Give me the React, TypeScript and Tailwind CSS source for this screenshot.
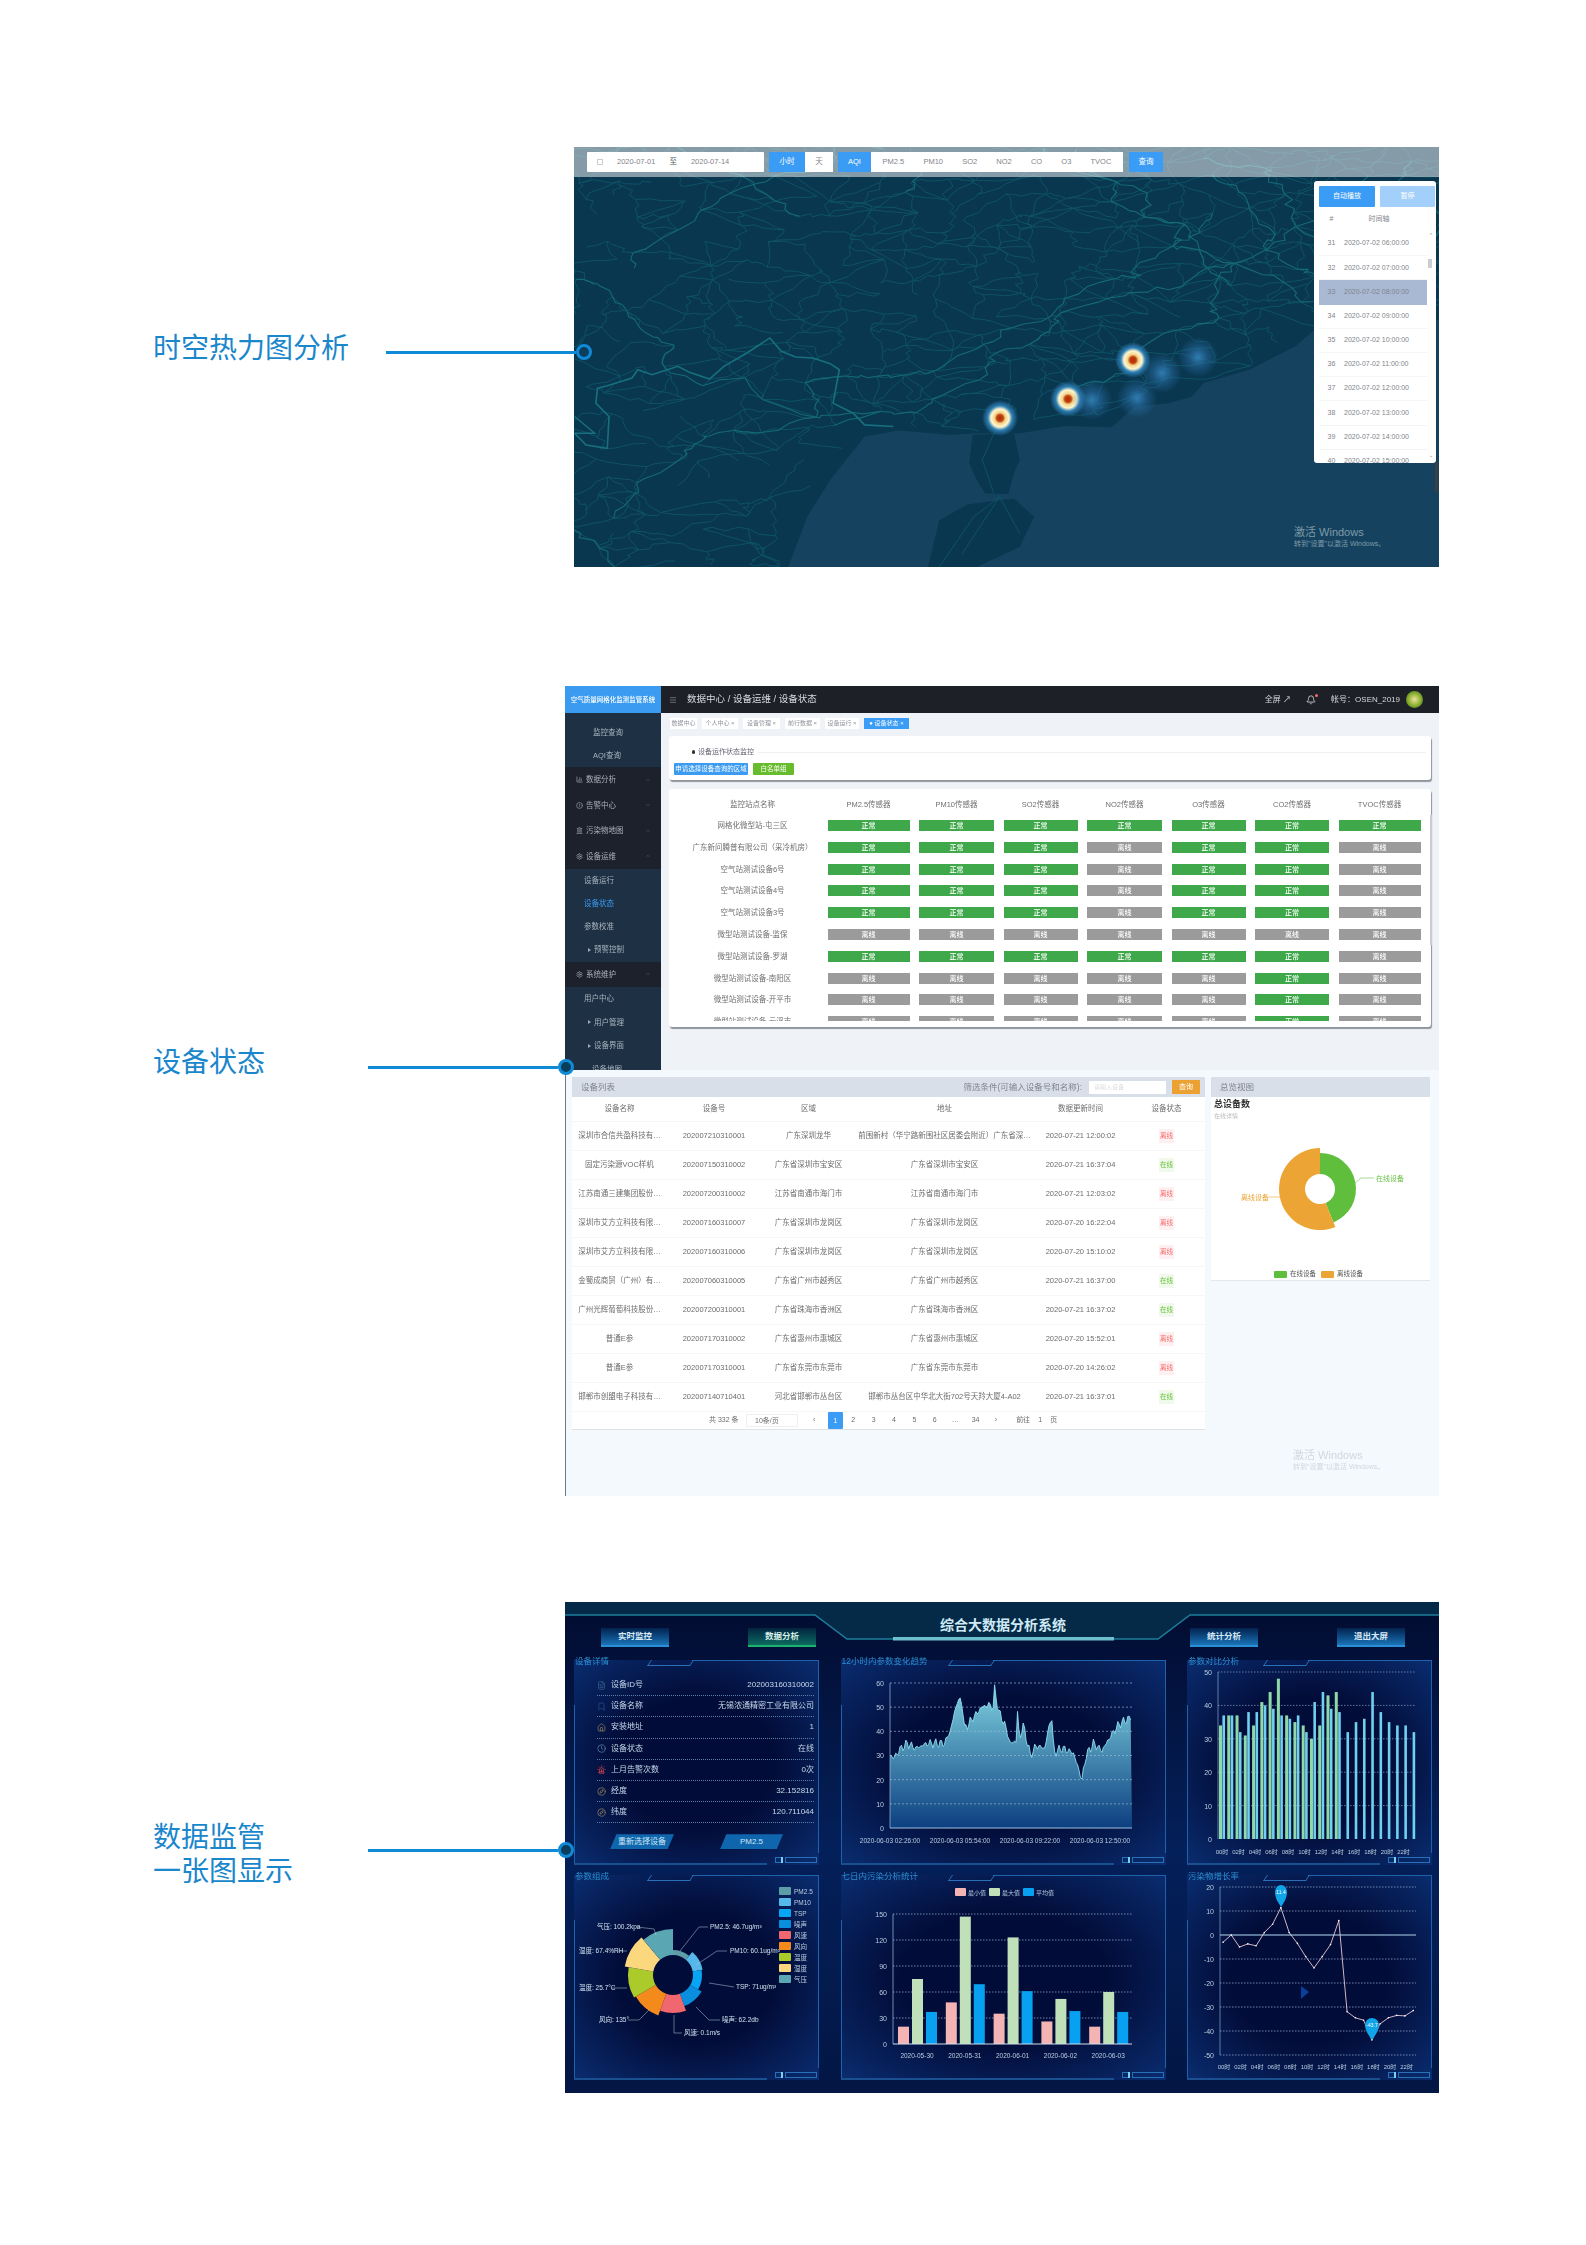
import type { ReactNode } from "react";
import { Bell, Bookmark, ChartColumn, ChevronDown, ChevronUp, CircleAlert, Clock, Compass, FileText, House, Landmark, Menu, Settings, Siren } from "lucide-react";

// seeded random so the map is the same on every load
function rng(seed: number) {
  let s = seed;
  return () => {
    s = (s * 1664525 + 1013904223) % 4294967296;
    return s / 4294967296;
  };
}

const COAST: [number, number][] = [
  [24, 3000], [395, 1290], [430, 1130], [470, 1020], [530, 890], [590, 872], [680, 885], [720, 880], [800, 880], [880, 858],
  [960, 862], [1000, 800], [1060, 790], [1100, 770], [1120, 730], [1200, 690], [1280, 620], [1310, 575], [1530, 540],
];

function coastY(x: number) {
  for (let i = 1; i < COAST.length; i++) {
    const [x0, y0] = COAST[i - 1];
    const [x1, y1] = COAST[i];
    if (x <= x1) return y0 + ((x - x0) / (x1 - x0)) * (y1 - y0);
  }
  return 540;
}

type Pt = { x: number; y: number };

function buildRoads() {
  const r = rng(71);
  const nodes: Pt[][] = [];
  for (let i = 0; i < 27; i++) {
    const col: Pt[] = [];
    for (let j = 0; j < 26; j++) {
      col.push({ x: 24 + i * 58 + (r() - 0.5) * 46, y: 24 + j * 50 + (r() - 0.5) * 36 });
    }
    nodes.push(col);
  }
  const link = (a: Pt, b: Pt) => {
    const parts = [`M${a.x.toFixed(0)} ${a.y.toFixed(0)}`];
    for (let t = 1; t < 4; t++) {
      const x = a.x + ((b.x - a.x) * t) / 4 + (r() - 0.5) * 18;
      const y = a.y + ((b.y - a.y) * t) / 4 + (r() - 0.5) * 14;
      parts.push(`L${x.toFixed(0)} ${y.toFixed(0)}`);
    }
    parts.push(`L${b.x.toFixed(0)} ${b.y.toFixed(0)}`);
    return parts.join(" ");
  };
  const thin: string[] = [];
  const main: string[] = [];
  for (let i = 0; i < 27; i++) {
    for (let j = 0; j < 26; j++) {
      const a = nodes[i][j];
      if (a.y > coastY(a.x) - 6) continue;
      const targets = [nodes[i + 1]?.[j], nodes[i]?.[j + 1], nodes[i + 1]?.[j + 1], nodes[i + 1]?.[j - 1]];
      targets.forEach((b, k) => {
        if (!b || b.y > coastY(b.x) - 6) return;
        const keep = k >= 2 ? 0.3 : a.x > 500 && a.y < 860 ? 0.75 : 0.5;
        if (r() < keep) thin.push(link(a, b));
      });
    }
  }
  // long highways: walk from node to node, keeping roughly the same heading
  for (let n = 0; n < 22; n++) {
    let i = Math.floor(r() * 27);
    let j = Math.floor(r() * 26);
    const di = r() < 0.5 ? 1 : -1;
    const dj = r() < 0.5 ? 1 : -1;
    for (let step = 0; step < 14; step++) {
      const ni = i + (r() < 0.6 ? di : 0);
      const nj = j + (r() < 0.6 ? dj : 0);
      const a = nodes[i]?.[j];
      const b = nodes[ni]?.[nj];
      if (!a || !b || b.y > coastY(b.x) - 6) break;
      if (a !== b) main.push(link(a, b));
      i = ni;
      j = nj;
    }
  }
  return { thin, main };
}

const ROADS = buildRoads();

const HEAT = [
  { left: 1000, top: 418, hot: true },
  { left: 1068, top: 399, hot: true },
  { left: 1133, top: 360, hot: true },
  { left: 1092, top: 400, hot: false },
  { left: 1137, top: 398, hot: false },
  { left: 1162, top: 373, hot: false },
  { left: 1198, top: 357, hot: false },
];

const TIME_ROWS = ["31|2020-07-02 06:00:00", "32|2020-07-02 07:00:00", "33|2020-07-02 08:00:00", "34|2020-07-02 09:00:00", "35|2020-07-02 10:00:00", "36|2020-07-02 11:00:00", "37|2020-07-02 12:00:00", "38|2020-07-02 13:00:00", "39|2020-07-02 14:00:00", "40|2020-07-02 15:00:00"];

function HeatMapPanel() {
  return (
    <div className="relative w-[865px] h-[420px] overflow-hidden">
      <svg className="block w-[865px] h-[420px] blur-[0.4px]" viewBox="24 24 1506 1256" preserveAspectRatio="none">
        <rect x="24" y="24" width="1506" height="1256" fill="#0a3750" />
        <polygon fill="#15435f" points={COAST.slice(1).map(p => p.join(",")).join(" ") + " 1530,1280 395,1280"} />
        <path d="M718 885 L712 970 L725 1020 L740 1060 L780 1062 L790 1000 L800 960 L790 880 Z" fill="#0a3750" />
        <path d="M640 1280 L660 1140 L710 1092 L790 1075 L825 1130 L800 1220 L725 1280 Z" fill="#0a3750" />
        <g fill="none" stroke="#0f5568" strokeWidth="1" opacity="0.9">
          {ROADS.thin.map((d, i) => <path key={i} d={d} vectorEffect="non-scaling-stroke" />)}
          <path d="M760 860 L735 960 L755 1060 M660 1280 L720 1130 L765 1070 L800 1180 M765 1070 L700 1240" vectorEffect="non-scaling-stroke" />
        </g>
        <g fill="none" stroke="#146a76" strokeWidth="1.1">
          {ROADS.main.map((d, i) => <path key={i} d={d} vectorEffect="non-scaling-stroke" />)}
        </g>
        <path
          d="M25 880 L45 915 L82 925 L85 830 L62 790 L65 745 L82 738 L125 715 L135 690 L160 705 L205 680 L225 698 L260 718 L285 680 L325 640 L365 595 L385 635 L410 652 L440 655 L470 672 L486 690 L475 790 L510 820 L530 855 L580 860"
          fill="none" stroke="#17707f" strokeWidth="1.6" vectorEffect="non-scaling-stroke"
        />
        <path d="M25 830 L60 880 L25 880" fill="none" stroke="#17707f" strokeWidth="1.4" vectorEffect="non-scaling-stroke" />
      </svg>
      {HEAT.map(p => (
        <div
          key={p.left}
          className={p.hot
            ? "absolute w-[36px] h-[36px] -ml-[18px] -mt-[18px] rounded-full blur-[0.5px] bg-[radial-gradient(circle_closest-side,#a8300c_0%,#c2410c_18%,#f3d48a_30%,#fff6d0_50%,#2f7fb5_68%,#2f7fb500_100%)]"
            : "absolute w-[40px] h-[40px] -ml-[20px] -mt-[20px] rounded-full bg-[radial-gradient(circle_closest-side,#2f7cb0_0%,#2a70a880_45%,#2a70a800_100%)]"}
          style={{ left: p.left - 574, top: p.top - 147 }}
        />
      ))}
      <div className="absolute left-0 top-0 w-full h-[30px] flex items-center pl-[13px] bg-[#ffffff80] text-[7.5px] text-[#7f848c]">
        <div className="w-[177px] h-[20px] bg-white rounded-[1px] flex items-center pl-[10px]">
          <span className="w-[6px] h-[6px] border border-[#ccc] mr-[14px]" />
          <span>2020-07-01</span>
          <span className="mx-[14px] text-[#555]">至</span>
          <span>2020-07-14</span>
        </div>
        <div className="ml-[5px] w-[36px] h-[20px] bg-[#3b9cf5] text-white flex items-center justify-center">小时</div>
        <div className="w-[28px] h-[20px] bg-white flex items-center justify-center">天</div>
        <div className="ml-[5px] w-[33px] h-[20px] bg-[#3b9cf5] text-white flex items-center justify-center">AQI</div>
        <div className="w-[252px] h-[20px] bg-white flex items-center justify-around px-[2px]">
          {["PM2.5", "PM10", "SO2", "NO2", "CO", "O3", "TVOC"].map(t => <span key={t}>{t}</span>)}
        </div>
        <div className="ml-[6px] w-[34px] h-[20px] bg-[#3b9cf5] text-white flex items-center justify-center">查询</div>
      </div>
      <div className="absolute left-[740px] top-[34px] w-[122px] h-[282px] bg-white rounded-[3px] overflow-hidden text-[7px] text-[#7f848c] pl-[5px]">
        <div className="flex gap-[5px] pt-[5px]">
          <div className="w-[56px] h-[21px] bg-[#3b9cf5] text-white flex items-center justify-center rounded-[1px]">自动播放</div>
          <div className="w-[55px] h-[21px] bg-[#a3d0fa] text-white flex items-center justify-center rounded-[1px]">暂停</div>
        </div>
        <div className="flex h-[25px] items-center">
          <span className="w-[25px] text-center">#</span>
          <span className="w-[70px] text-center">时间轴</span>
        </div>
        {TIME_ROWS.map(row => {
          const [n, t] = row.split("|");
          return (
            <div key={n} className={n === "33" ? "flex h-[24.2px] items-center bg-[#a9b9d3] w-[108px]" : "flex h-[24.2px] items-center w-[108px] border-b border-[#f4f4f4]"}>
              <span className="w-[25px] text-center">{n}</span>
              <span className="whitespace-nowrap">{t}</span>
            </div>
          );
        })}
        <span className="absolute left-[114px] top-[78px] w-[4px] h-[9px] bg-[#c9ccd1]" />
        <span className="absolute left-[115px] top-[52px] text-[5px] leading-[5px] text-[#777]">⌃</span>
        <span className="absolute left-[115px] top-[272px] text-[5px] leading-[5px] text-[#777]">⌄</span>
      </div>
      <span className="absolute left-[861px] top-[315px] w-[3px] h-[30px] bg-[#3a3f44]" />
      <Watermark className="left-[720px] top-[379px] text-[#7f9aa9]" />
    </div>
  );
}

function Watermark({ className }: { className: string }) {
  return (
    <div className={"absolute " + className}>
      <div className="text-[11px] leading-[13px]">激活 Windows</div>
      <div className="text-[7px] leading-[10px] whitespace-nowrap">转到"设置"以激活 Windows。</div>
    </div>
  );
}

const SENSORS: { name: string; on: string }[] = [
  { name: "网格化微型站-屯三区", on: "1111111" },
  { name: "广东新问腾普有限公司（采冷机房）", on: "1110110" },
  { name: "空气站测试设备6号", on: "1110110" },
  { name: "空气站测试设备4号", on: "1110110" },
  { name: "空气站测试设备3号", on: "1110110" },
  { name: "微型站测试设备-监保", on: "0000000" },
  { name: "微型站测试设备-罗湖", on: "1111110" },
  { name: "微型站测试设备-南阳区", on: "0000010" },
  { name: "微型站测试设备-开平市", on: "0000010" },
  { name: "微型站测试设备-云浮市", on: "0000010" },
];

const SENSOR_HEAD = ["PM2.5传感器", "PM10传感器", "SO2传感器", "NO2传感器", "O3传感器", "CO2传感器", "TVOC传感器"];

const TABS = [
  { label: "数据中心", w: "w-[27px]" },
  { label: "个人中心 ×", w: "w-[36px]" },
  { label: "设备管理 ×", w: "w-[37px]" },
  { label: "前行数据 ×", w: "w-[35px]" },
  { label: "设备运行 ×", w: "w-[34px]" },
];

function SideItem({ label, active }: { label: string; active?: boolean }) {
  return <div className={active ? "h-[23px] flex items-center pl-[19px] text-[#3b9cf5]" : "h-[23px] flex items-center pl-[19px]"}>{label}</div>;
}

function SideArrowItem({ label }: { label: string }) {
  return (
    <div className="h-[23.5px] flex items-center pl-[23px] gap-[3px] relative">
      <span className="w-0 h-0 border-y-[2px] border-y-transparent border-l-[3px] border-l-[#9aa5b1]" />
      {label}
    </div>
  );
}

function SideHead({ icon, label, open }: { icon: ReactNode; label: string; open?: boolean }) {
  return (
    <div className="h-[25.5px] flex items-center pl-[11px] gap-[3px] text-[#aab2bb] relative">
      {icon}
      <span>{label}</span>
      {open ? <ChevronUp size={6} className="ml-auto mr-[10px] text-[#5a6470]" /> : <ChevronDown size={6} className="ml-auto mr-[10px] text-[#5a6470]" />}
    </div>
  );
}

function DevicePanel() {
  return (
    <div className="relative w-[874px] h-[384px] flex overflow-hidden bg-[#eff2f7] blur-[0.3px]">
      <aside className="w-[96px] shrink-0 bg-[#1d3044] text-[7.5px] text-[#a9b4bf]">
        <div className="h-[27px] bg-[#3a9bf0] text-white flex items-center justify-center text-[6.5px] font-medium whitespace-nowrap">空气质量网格化监测监管系统</div>
        <div className="pt-[8px]">
          <div className="h-[23px] flex items-center pl-[28px]">监控查询</div>
          <div className="h-[23px] flex items-center pl-[28px]">AQI查询</div>
        </div>
        <div className="bg-[#1c212b]">
          <SideHead icon={<ChartColumn size={7} />} label="数据分析" />
          <SideHead icon={<CircleAlert size={7} />} label="告警中心" />
          <SideHead icon={<Landmark size={7} />} label="污染物地图" />
          <SideHead icon={<Settings size={7} />} label="设备运维" open />
        </div>
        <SideItem label="设备运行" />
        <SideItem label="设备状态" active />
        <SideItem label="参数校准" />
        <SideArrowItem label="预警控制" />
        <div className="bg-[#1c212b]">
          <SideHead icon={<Settings size={7} />} label="系统维护" />
        </div>
        <div className="h-[23.5px] flex items-center pl-[19px]">用户中心</div>
        <SideArrowItem label="用户管理" />
        <SideArrowItem label="设备界面" />
        <div className="h-[23.5px] flex items-center pl-[27px]">设备地图</div>
      </aside>
      <main className="flex-1 min-w-0">
        <div className="h-[27px] bg-[#1d2026] flex items-center text-[#d7dadf] pr-[16px]">
          <Menu size={8} className="ml-[8px] mr-[10px] text-[#8a9099]" />
          <span className="text-[9.5px] whitespace-nowrap">数据中心 / 设备运维 / 设备状态</span>
          <span className="ml-auto text-[8px]">全屏 ↗</span>
          <span className="ml-[15px] relative">
            <Bell size={10} />
            <span className="absolute -top-[1px] -right-[2px] w-[3px] h-[3px] rounded-full bg-[#f56c6c]" />
          </span>
          <span className="ml-[15px] text-[8px]">帐号：OSEN_2019</span>
          <span className="ml-[6px] w-[17px] h-[17px] rounded-full bg-[radial-gradient(circle,#e8e2a0_0%,#9ab83a_45%,#5a8f22_75%,#2f6a20_100%)]" />
        </div>
        <div className="h-[20px] flex items-center gap-[5px] pl-[9px] text-[6px] text-[#8f949c]">
          {TABS.map(t => (
            <span key={t.label} className={t.w + " h-[11px] bg-white flex items-center justify-center whitespace-nowrap overflow-hidden"}>{t.label}</span>
          ))}
          <span className="w-[45px] h-[11px] bg-[#3b9cf5] text-white flex items-center justify-center whitespace-nowrap">● 设备状态 ×</span>
        </div>
        <div className="ml-[8px] mr-[8px] mt-[3px] h-[44px] bg-white rounded-[3px] shadow-[1px_2px_1px_#8f949c] pl-[5px]">
          <div className="h-[27px] flex items-center pl-[18px] pt-[5px] text-[7px] text-[#667]">
            <span className="w-[3px] h-[4px] rounded-full bg-[#333] mr-[3px]" />
            <span className="whitespace-nowrap">设备运作状态监控</span>
            <span className="flex-1 h-px bg-[#f0f0f0] ml-[4px] mr-[5px]" />
          </div>
          <div className="flex gap-[5px] text-[6.5px] text-white">
            <span className="w-[74px] h-[12px] bg-[#3a9bf0] rounded-[1px] flex items-center justify-center whitespace-nowrap">申请选择设备查询的区域</span>
            <span className="w-[41px] h-[12px] bg-[#67bc2d] rounded-[1px] flex items-center justify-center">白名单组</span>
          </div>
        </div>
        <div className="relative ml-[8px] mr-[8px] mt-[9px] h-[238px] bg-white rounded-[3px] shadow-[1px_2px_1px_#8f949c] text-[7.5px] text-[#6f6f6f]">
          <div className="grid grid-cols-[149px_82px_75px_74px_75px_74px_74px_82px] gap-x-[9.5px] h-[31px] items-center text-center">
            <span className="pl-[18px]">监控站点名称</span>
            {SENSOR_HEAD.map(h => <span key={h} className="whitespace-nowrap">{h}</span>)}
          </div>
          <div className="h-[201px] overflow-hidden">
            {SENSORS.map(s => (
              <div key={s.name} className="grid grid-cols-[149px_82px_75px_74px_75px_74px_74px_82px] gap-x-[9.5px] h-[21.8px] items-start text-center">
                <span className="pl-[18px] whitespace-nowrap leading-[11px]">{s.name}</span>
                {s.on.split("").map((v, i) => (
                  <span key={i} className={v === "1" ? "h-[11px] bg-[#3fa84a] text-white text-[7px] leading-[11px] font-medium" : "h-[11px] bg-[#9b9b9b] text-white text-[7px] leading-[11px] font-medium"}>
                    {v === "1" ? "正常" : "离线"}
                  </span>
                ))}
              </div>
            ))}
          </div>
          <span className="absolute right-[-1px] top-[26px] w-[2px] h-[130px] bg-[#c9ccd1]" />
        </div>
      </main>
    </div>
  );
}

const DEVICES = [
  ["深圳市合信共盈科技有…", "202007210310001", "广东深圳龙华", "前围新村（华宁路新围社区居委会附近）广东省深…", "2020-07-21 12:00:02", "离线"],
  ["固定污染源VOC样机", "202007150310002", "广东省深圳市宝安区", "广东省深圳市宝安区", "2020-07-21 16:37:04", "在线"],
  ["江苏南通三建集团股份…", "202007200310002", "江苏省南通市海门市", "江苏省南通市海门市", "2020-07-21 12:03:02", "离线"],
  ["深圳市艾方立科技有限…", "202007160310007", "广东省深圳市龙岗区", "广东省深圳市龙岗区", "2020-07-20 16:22:04", "离线"],
  ["深圳市艾方立科技有限…", "202007160310006", "广东省深圳市龙岗区", "广东省深圳市龙岗区", "2020-07-20 15:10:02", "离线"],
  ["金蜀成商贸（广州）有…", "202007060310005", "广东省广州市越秀区", "广东省广州市越秀区", "2020-07-21 16:37:00", "在线"],
  ["广州光辉葡萄科技股份…", "202007200310001", "广东省珠海市香洲区", "广东省珠海市香洲区", "2020-07-21 16:37:02", "在线"],
  ["普通E参", "202007170310002", "广东省惠州市惠城区", "广东省惠州市惠城区", "2020-07-20 15:52:01", "离线"],
  ["普通E参", "202007170310001", "广东省东莞市东莞市", "广东省东莞市东莞市", "2020-07-20 14:26:02", "离线"],
  ["邯郸市创盟电子科技有…", "202007140710401", "河北省邯郸市丛台区", "邯郸市丛台区中华北大街702号天羚大厦4-A02", "2020-07-21 16:37:01", "在线"],
];

function sector(cx: number, cy: number, r0: number, r1: number, a0: number, a1: number) {
  const pt = (r: number, a: number) => {
    const t = ((a - 90) * Math.PI) / 180;
    return `${(cx + r * Math.cos(t)).toFixed(2)} ${(cy + r * Math.sin(t)).toFixed(2)}`;
  };
  const large = a1 - a0 > 180 ? 1 : 0;
  return `M${pt(r0, a0)} L${pt(r1, a0)} A${r1} ${r1} 0 ${large} 1 ${pt(r1, a1)} L${pt(r0, a1)} A${r0} ${r0} 0 ${large} 0 ${pt(r0, a0)} Z`;
}

function DeviceListPanel() {
  return (
    <div className="relative w-[874px] h-[426px] bg-[#f3f9fd] border-l border-[#6b7a88] flex items-start pl-[6px] pt-[7px] gap-[6px] text-[#6c6c6c] blur-[0.3px]">
      <div className="w-[633px] bg-white border-b border-[#dfe3e8]">
        <div className="h-[20px] bg-[#d9dfe8] flex items-center pl-[9px] pr-[5px] text-[8.5px] text-[#7f848e]">
          <span>设备列表</span>
          <span className="ml-auto">筛选条件(可输入设备号和名称):</span>
          <span className="ml-[7px] w-[77px] h-[13px] bg-white text-[6px] text-[#ddd] pl-[5px] leading-[13px]">请输入设备</span>
          <span className="ml-[6px] w-[28px] h-[14px] bg-[#eba233] text-white text-[7px] leading-[14px] text-center">查询</span>
        </div>
        <div className="grid grid-cols-[95px_94px_95px_177px_95px_77px] h-[25px] items-center text-center text-[7.5px] border-b border-[#f5f5f5]">
          {["设备名称", "设备号", "区域", "地址", "数据更新时间", "设备状态"].map(h => <span key={h}>{h}</span>)}
        </div>
        {DEVICES.map((d, i) => (
          <div key={i} className="grid grid-cols-[95px_94px_95px_177px_95px_77px] h-[29px] items-center text-center text-[7.5px] border-b border-[#f7f7f7]">
            {d.slice(0, 5).map((c, k) => <span key={k} className="whitespace-nowrap overflow-hidden">{c}</span>)}
            <span className="flex justify-center">
              <span className={d[5] === "在线" ? "w-[15px] h-[14px] bg-[#f0f9eb] text-[#67c23a] text-[6.5px] leading-[14px]" : "w-[15px] h-[14px] bg-[#fef0f0] text-[#f56c6c] text-[6.5px] leading-[14px]"}>{d[5]}</span>
            </span>
          </div>
        ))}
        <div className="h-[17px] flex items-center pl-[137px] text-[7px]">
          <span className="w-[37px]">共 332 条</span>
          <span className="w-[52px] h-[13px] border border-[#f0f0f0] pl-[8px] leading-[12px]">10条/页</span>
          <span className="ml-[15px] w-[15px]">‹</span>
          <span className="w-[15px] h-[17px] bg-[#3b9cf5] text-white text-center leading-[17px] rounded-[1px]">1</span>
          {["2", "3", "4", "5", "6", "…", "34", "›"].map(p => <span key={p} className="w-[20.4px] text-center">{p}</span>)}
          <span className="ml-[10px]">前往</span>
          <span className="w-[20px] text-center">1</span>
          <span>页</span>
        </div>
      </div>
      <div className="w-[219px] bg-white border-b border-[#e4e8ec]">
        <div className="h-[20px] bg-[#d9dfe8] flex items-center pl-[9px] text-[8.5px] text-[#7f848e]">总览视图</div>
        <div className="pl-[3px] pt-[1px] text-[9px] font-bold text-[#333] leading-[12px]">总设备数</div>
        <div className="pl-[3px] text-[6px] text-[#bbb] leading-[9px] mt-[2px]">在线详情</div>
        <svg width="219" height="147" className="block">
          <path d={sector(109, 68, 15, 36, 0, 158)} fill="#5fbe3c" />
          <path d={sector(109, 68, 15, 41, 158, 360)} fill="#eca534" />
          <path d="M143 63 L150 57 L163 57" stroke="#6cc04a" strokeWidth="0.6" fill="none" />
          <text x="165" y="60" fontSize="7" fill="#6cc04a">在线设备</text>
          <path d="M69 76 L58 76" stroke="#eca534" strokeWidth="0.6" fill="none" />
          <text x="30" y="79" fontSize="7" fill="#eca534">离线设备</text>
        </svg>
        <div className="h-[12px] flex items-center justify-center gap-[3px] text-[6.5px] text-[#555] pr-[4px]">
          <span className="w-[13px] h-[7px] bg-[#5fbe3c] rounded-[1px]" />
          <span className="mr-[2px]">在线设备</span>
          <span className="w-[13px] h-[7px] bg-[#eca534] rounded-[1px]" />
          <span>离线设备</span>
        </div>
      </div>
      <Watermark className="left-[727px] top-[379px] text-[#cfd8e0]" />
    </div>
  );
}

function Panel({ title, wide, decoRight, children }: { title: string; wide?: boolean; decoRight?: boolean; children: ReactNode }) {
  return (
    <div className={(wide ? "w-[325px]" : "w-[245px]") + " relative h-[205px] bg-[radial-gradient(ellipse_at_center,#020c38_45%,#0a2d70_100%)]"}>
      {children}
      <span className="absolute left-[1px] -top-[4px] text-[8.5px] leading-[10px] text-[#2a8ed0] whitespace-nowrap">{title}</span>
      <span className={(wide ? "left-[152px]" : decoRight ? "left-[121px]" : "left-[118px]") + " absolute top-0 right-0 h-px bg-[#1f62ab]"} />
      <span className={(wide ? "left-[109px]" : decoRight ? "left-[78px]" : "left-[75px]") + " absolute top-0 w-[43px] h-[6px] border-b border-[#2a70b8] skew-x-[-35deg] border-x"} />
      <span className="absolute right-0 top-0 h-[193px] w-px bg-[#1f62ab]" />
      <span className="absolute left-0 top-[45px] bottom-0 w-px bg-[#1f62ab]" />
      <span className="absolute left-0 bottom-0 right-[52px] h-[2px] bg-[#1a4f90]" />
      <span className="absolute right-[2px] bottom-[2px] flex items-center h-[6px]">
        <span className="w-[8px] h-[6px] border border-[#2a70b8] bg-[#072a66]" />
        <span className="w-[2px] h-[6px] bg-[#7fd0f0] -ml-[2px]" />
        <span className="ml-[2px] w-[32px] h-[6px] border border-[#2a70b8]" />
      </span>
    </div>
  );
}

function DetailRow({ icon, label, value }: { icon: ReactNode; label: string; value: string }) {
  return (
    <div className="h-[21.2px] flex items-center border-b border-dotted border-[#5a7fa8] text-[8px] text-[#c6d8ea]">
      <span className="w-[14px] flex justify-start">{icon}</span>
      <span>{label}</span>
      <span className="ml-auto whitespace-nowrap">{value}</span>
    </div>
  );
}

function DetailPanel() {
  return (
    <div className="pt-[15px] pl-[23px] pr-[5px]">
      <DetailRow icon={<FileText size={9} className="text-[#3a5f8a]" />} label="设备ID号" value="202003160310002" />
      <DetailRow icon={<Bookmark size={9} className="text-[#1f4f80]" />} label="设备名称" value="无锡浓通精密工业有限公司" />
      <DetailRow icon={<House size={9} className="text-[#8b7d5c]" />} label="安装地址" value="1" />
      <DetailRow icon={<Clock size={9} className="text-[#5d7fa8]" />} label="设备状态" value="在线" />
      <DetailRow icon={<Siren size={9} className="text-[#e0484c]" />} label="上月告警次数" value="0次" />
      <DetailRow icon={<Compass size={9} className="text-[#8b7d5c]" />} label="经度" value="32.152816" />
      <DetailRow icon={<Compass size={9} className="text-[#8b7d5c]" />} label="纬度" value="120.711044" />
      <div className="flex mt-[11px] pl-[13px] gap-[46px] text-[8px] text-[#cfe6f5]">
        <span className="w-[64px] h-[15px] bg-[#0f66ad] text-center leading-[15px] [clip-path:polygon(10%_0,100%_0,90%_100%,0_100%)]">重新选择设备</span>
        <span className="w-[63px] h-[15px] bg-[#0f66ad] text-center leading-[15px] [clip-path:polygon(10%_0,100%_0,90%_100%,0_100%)]">PM2.5</span>
      </div>
    </div>
  );
}

const TREND: [number, number][] = [
  [0, 30], [8, 29], [15, 32], [30, 35], [45, 33], [65, 35], [95, 35], [105, 40], [118, 53], [126, 52], [130, 41], [140, 44], [160, 50], [172, 51], [180, 50], [182, 58], [190, 48],
  [200, 43], [210, 35], [220, 36], [222, 50], [226, 36], [232, 43], [245, 30], [255, 34], [270, 33], [282, 47], [286, 31], [300, 33], [320, 31], [335, 20], [342, 30], [355, 35], [370, 32], [385, 38], [400, 43], [422, 46],
];

function trendAt(x: number) {
  for (let i = 1; i < TREND.length; i++) {
    if (x <= TREND[i][0]) {
      const [x0, v0] = TREND[i - 1];
      const [x1, v1] = TREND[i];
      return v0 + ((x - x0) / (x1 - x0)) * (v1 - v0);
    }
  }
  return 46;
}

function AreaChart() {
  const xs: number[] = [];
  for (let x = 0; x <= 422; x += 2.5) xs.push(x);
  const points = xs.map(x => {
    const v = trendAt(x) + Math.sin(x * 1.9) * 0.9 + Math.sin(x * 0.73) * 1.1;
    return `${(49 + x * 0.573).toFixed(1)},${(168 - v * 2.417).toFixed(1)}`;
  });
  return (
    <svg width="325" height="205" className="block">
      <defs>
        <linearGradient id="areaFill" x1="0" y1="0" x2="0" y2="1">
          <stop offset="0" stopColor="#7fd2e0" />
          <stop offset="1" stopColor="#0c3f80" />
        </linearGradient>
      </defs>
      <polygon points={`49,168 ${points.join(" ")} 291,168`} fill="url(#areaFill)" />
      {[0, 1, 2, 3, 4, 5, 6].map(i => (
        <g key={i}>
          {i > 0 && <line x1="49" x2="291" y1={168 - i * 24.17} y2={168 - i * 24.17} stroke="#aac4de" strokeWidth="0.6" strokeDasharray="2 2" />}
          <text x="43" y={171 - i * 24.17} fontSize="7" fill="#b9cde0" textAnchor="end">{i * 10}</text>
        </g>
      ))}
      <polyline points={points.join(" ")} fill="none" stroke="#8fe0ee" strokeWidth="0.9" />
      <line x1="49" x2="49" y1="23" y2="168" stroke="#9fc0e0" strokeWidth="0.7" />
      <line x1="49" x2="291" y1="168" y2="168" stroke="#9fc0e0" strokeWidth="1" />
      {["2020-06-03 02:26:00", "2020-06-03 05:54:00", "2020-06-03 09:22:00", "2020-06-03 12:50:00"].map((t, i) => (
        <text key={t} x={49 + i * 70} y="183" fontSize="6.5" fill="#b9cde0" textAnchor="middle">{t}</text>
      ))}
    </svg>
  );
}

const GREEN_BARS = [34, 37, 37, 31, 34, 41, 44, 48, 37, 35, 34, 30, 34, 43, 44];
const BLUE_BARS = [37, 37, 32, 38, 38, 40, 39, 37, 36, 37, 32, 41, 44, 39, 38, 32, 35, 36, 44, 38, 35, 34, 34, 32];

function hourLabels() {
  return ["00时", "02时", "04时", "06时", "08时", "10时", "12时", "14时", "16时", "18时", "20时", "22时"];
}

function CompareChart() {
  return (
    <svg width="245" height="205" className="block">
      {[0, 1, 2, 3, 4, 5].map(i => (
        <g key={i}>
          {i > 0 && <line x1="31" x2="229" y1={179 - i * 33.4} y2={179 - i * 33.4} stroke="#9fb8d8" strokeWidth="0.6" strokeDasharray="1.5 1.5" />}
          <text x="25" y={182 - i * 33.4} fontSize="7" fill="#b9cde0" textAnchor="end">{i * 10}</text>
        </g>
      ))}
      {BLUE_BARS.map((v, i) => {
        const x = 32 + i * 8.27;
        const g = GREEN_BARS[i];
        return (
          <g key={i}>
            {g !== undefined && <rect x={x} y={179 - g * 3.34} width="3" height={g * 3.34} fill="#8fd8a8" />}
            <rect x={x + 3.4} y={179 - v * 3.34} width="2.6" height={v * 3.34} fill="#6fd0f0" />
          </g>
        );
      })}
      <line x1="31" x2="31" y1="12" y2="179" stroke="#9fc0e0" strokeWidth="0.6" />
      {hourLabels().map((t, i) => <text key={t} x={35 + i * 16.5} y="194" fontSize="6" fill="#b9cde0" textAnchor="middle">{t}</text>)}
    </svg>
  );
}

const ROSE = [
  { name: "PM2.5", color: "#5d9da8", r: 25 },
  { name: "PM10", color: "#56b7ea", r: 30 },
  { name: "TSP", color: "#08a5f5", r: 29 },
  { name: "噪声", color: "#0a8fdf", r: 33 },
  { name: "风速", color: "#f0676f", r: 38 },
  { name: "风向", color: "#f58a1c", r: 43 },
  { name: "温度", color: "#aacb2a", r: 45 },
  { name: "湿度", color: "#fbd77e", r: 49 },
  { name: "气压", color: "#5aa6b3", r: 46 },
];

const ROSE_LABELS = [
  { x: 23, y: 54, t: "气压: 100.2kpa" },
  { x: 136, y: 54, t: "PM2.5: 46.7ug/m³" },
  { x: 156, y: 78, t: "PM10: 60.1ug/m³" },
  { x: 162, y: 114, t: "TSP: 71ug/m³" },
  { x: 148, y: 147, t: "噪声: 62.2db" },
  { x: 110, y: 160, t: "风速: 0.1m/s" },
  { x: 25, y: 147, t: "风向: 135°" },
  { x: 5, y: 115, t: "温度: 25.7°C" },
  { x: 5, y: 78, t: "湿度: 67.4%RH" },
];

const ROSE_LEADERS = ["M63 52 L80 54 L82 60", "M134 52 L125 52 L106 76", "M153 76 L143 76 L122 90", "M160 112 L135 108", "M146 145 L135 145 L122 132", "M108 158 L100 158 L100 140", "M54 145 L65 145 L75 135", "M38 113 L53 113", "M43 76 L53 76"];

function RoseChart() {
  return (
    <svg width="245" height="205" className="block">
      {ROSE.map((s, i) => <path key={s.name} d={sector(99, 100, 20, s.r, i * 40, (i + 1) * 40)} fill={s.color} />)}
      {ROSE_LEADERS.map(d => <path key={d} d={d} stroke="#b9cde0" strokeWidth="0.5" fill="none" />)}
      {ROSE_LABELS.map(l => <text key={l.t} x={l.x} y={l.y} fontSize="6.5" fill="#cfe0ee">{l.t}</text>)}
      {ROSE.map((s, i) => (
        <g key={s.name}>
          <rect x="205" y={12 + i * 11} width="12" height="8" rx="1" fill={s.color} />
          <text x="220" y={19 + i * 11} fontSize="6.5" fill="#b9cde0">{s.name}</text>
        </g>
      ))}
    </svg>
  );
}

const WEEK = [
  { d: "2020-05-30", v: [20, 75, 37] },
  { d: "2020-05-31", v: [48, 147, 69] },
  { d: "2020-06-01", v: [35, 123, 61] },
  { d: "2020-06-02", v: [26, 52, 38] },
  { d: "2020-06-03", v: [20, 60, 37] },
];

function WeekChart() {
  const colors = ["#f4b4b4", "#bfe0b8", "#08a0f0"];
  return (
    <svg width="325" height="205" className="block">
      {[0, 1, 2].map(i => (
        <g key={i}>
          <rect x={114 + i * 34} y="13" width="11" height="8" rx="1" fill={colors[i]} />
          <text x={127 + i * 34} y="20" fontSize="6" fill="#b9cde0">{["最小值", "最大值", "平均值"][i]}</text>
        </g>
      ))}
      {[0, 1, 2, 3, 4, 5].map(i => (
        <g key={i}>
          {i > 0 && <line x1="52" x2="291" y1={169 - i * 26} y2={169 - i * 26} stroke="#9fb8d8" strokeWidth="0.7" strokeDasharray="1.5 1.5" />}
          <text x="46" y={172 - i * 26} fontSize="7" fill="#b9cde0" textAnchor="end">{i * 30}</text>
        </g>
      ))}
      {WEEK.map((w, i) => (
        <g key={w.d}>
          {w.v.map((v, k) => (
            <rect key={k} x={57 + i * 47.8 + k * 14} y={169 - (v * 26) / 30} width="11" height={(v * 26) / 30} fill={colors[k]} />
          ))}
          <text x={76 + i * 47.8} y="183" fontSize="6.5" fill="#b9cde0" textAnchor="middle">{w.d}</text>
        </g>
      ))}
      <line x1="52" x2="52" y1="39" y2="169" stroke="#9fc0e0" strokeWidth="0.7" />
      <line x1="52" x2="291" y1="169" y2="169" stroke="#cfe0f0" strokeWidth="1" />
    </svg>
  );
}

const GROWTH = [-3, 0, -5, -3.7, -4.5, 1, 4.5, 11.4, 1, -3.5, -9, -13.7, -9, -4, 6, -32, -34.5, -35.5, -43.7, -37, -34.5, -33.5, -33.7, -31.5];

function GrowthChart() {
  const y = (v: number) => 60 - v * 2.4;
  const x = (i: number) => 36 + i * 8.27;
  const pts = GROWTH.map((v, i) => `${x(i).toFixed(1)},${y(v).toFixed(1)}`).join(" ");
  return (
    <svg width="245" height="205" className="block">
      {[2, 1, -1, -2, -3, -4, -5].map(i => (
        <line key={i} x1="33" x2="229" y1={y(i * 10)} y2={y(i * 10)} stroke="#9fb8d8" strokeWidth="0.7" strokeDasharray="1.5 1.5" />
      ))}
      {[2, 1, 0, -1, -2, -3, -4, -5].map(i => (
        <text key={i} x="27" y={y(i * 10) + 3} fontSize="7" fill="#b9cde0" textAnchor="end">{i * 10}</text>
      ))}
      <line x1="33" x2="229" y1="60" y2="60" stroke="#5a7598" strokeWidth="2" />
      <line x1="33" x2="33" y1="12" y2="180" stroke="#9fc0e0" strokeWidth="0.6" />
      <path d="M114 124 L122 117 L114 111 Z" fill="#0a3f9a" />
      <polyline points={pts} fill="none" stroke="#e8c8d4" strokeWidth="0.9" />
      {GROWTH.map((v, i) => <circle key={i} cx={x(i)} cy={y(v)} r="0.8" fill="#fff" />)}
      <path d="M94 32 C90 26 88 22 88 17 A6 7 0 0 1 100 17 C100 22 98 26 94 32 Z" fill="#10a5e8" />
      <text x="94" y="19" fontSize="5" fill="#fff" textAnchor="middle">11.4</text>
      <path d="M185 165 C181 159 178 155 178 150 A7 7 0 0 1 192 150 C192 155 189 159 185 165 Z" fill="#10a5e8" />
      <text x="185" y="152" fontSize="5" fill="#fff" textAnchor="middle">-43.7</text>
      {hourLabels().map((t, i) => <text key={t} x={37 + i * 16.6} y="194" fontSize="6" fill="#b9cde0" textAnchor="middle">{t}</text>)}
    </svg>
  );
}

function NavButton({ label, green }: { label: string; green?: boolean }) {
  return (
    <div className={green
      ? "w-[68px] h-[19px] mt-[26px] bg-gradient-to-b from-[#04243f] to-[#0e6b5e] border-b-2 border-[#19b56f] text-[8.5px] font-bold text-[#d8efe8] flex items-center justify-center"
      : "w-[68px] h-[19px] mt-[26px] bg-gradient-to-b from-[#04234f] to-[#1a74b8] border-b-2 border-[#2a8fd6] text-[8.5px] font-bold text-[#d8e8f5] flex items-center justify-center"}>{label}</div>
  );
}

function BigScreenPanel() {
  return (
    <div className="w-[874px] h-[491px] bg-gradient-to-b from-[#020c30] via-[#04205a] to-[#031644] pl-[9px]">
      <div className="relative -ml-[9px] h-[58px] flex pl-[36px]">
        <svg className="absolute inset-0" width="874" height="58">
          <path d="M0 0 H874 V13 H625 L593 37 H282 L250 13 H0 Z" fill="#052a48" />
          <path d="M0 13 H250 L282 37 H593 L625 13 H874" fill="none" stroke="#1d7f9a" strokeWidth="1.5" />
          <rect x="328" y="35" width="221" height="3.5" fill="#6cc0cc" />
        </svg>
        <div className="relative"><NavButton label="实时监控" /></div>
        <div className="relative ml-[79px]"><NavButton label="数据分析" green /></div>
        <div className="relative w-[374px] text-center text-[14px] font-bold text-[#cfeaf5] pt-[13px] leading-[20px]">综合大数据分析系统</div>
        <div className="relative"><NavButton label="统计分析" /></div>
        <div className="relative ml-[79px]"><NavButton label="退出大屏" /></div>
      </div>
      <div className="grid grid-cols-[245px_325px_245px] gap-x-[21.5px] gap-y-[10px] blur-[0.3px]">
        <Panel title="设备详情"><DetailPanel /></Panel>
        <Panel title="12小时内参数变化趋势" wide><AreaChart /></Panel>
        <Panel title="参数对比分析" decoRight><CompareChart /></Panel>
        <Panel title="参数组成"><RoseChart /></Panel>
        <Panel title="七日内污染分析统计" wide><WeekChart /></Panel>
        <Panel title="污染物增长率" decoRight><GrowthChart /></Panel>
      </div>
    </div>
  );
}

function Connector({ className }: { className: string }) {
  return (
    <div className={"relative z-10 flex items-center " + className}>
      <span className="w-[190px] h-[3px] bg-[#0f8ad6]" />
      <span className="w-[16px] h-[16px] rounded-full border-[3px] border-[#0f8ad6] bg-[#0b3d5c]" />
    </div>
  );
}

export default function App() {
  return (
    <div className="w-[1586px] h-[2245px] bg-white pt-[147px] pl-[153px] font-['Liberation_Sans','Noto_Sans_CJK_SC',sans-serif] overflow-hidden">
      <section className="flex items-start">
        <div className="w-[421px] shrink-0 flex items-center mt-[191px]">
          <div className="w-[233px] text-[28px] leading-[34px] text-[#1a86cc] whitespace-nowrap -mt-[6px]">时空热力图分析</div>
          <Connector className="-mr-[18px]" />
        </div>
        <HeatMapPanel />
      </section>

      <section className="flex items-start mt-[119px]">
        <div className="w-[412px] shrink-0 flex items-center mt-[368px]">
          <div className="w-[215px] text-[28px] leading-[34px] text-[#1a86cc] whitespace-nowrap -mt-[8px]">设备状态</div>
          <Connector className="-mr-[9px]" />
        </div>
        <div className="flex flex-col">
          <DevicePanel />
          <DeviceListPanel />
        </div>
      </section>

      <section className="flex items-start mt-[106px]">
        <div className="w-[412px] shrink-0 flex items-start mt-[219px]">
          <div className="w-[215px] text-[28px] leading-[34px] text-[#1a86cc] whitespace-nowrap">
            <div>数据监管</div>
            <div>一张图显示</div>
          </div>
          <Connector className="-mr-[9px] mt-[21px]" />
        </div>
        <BigScreenPanel />
      </section>
    </div>
  );
}
